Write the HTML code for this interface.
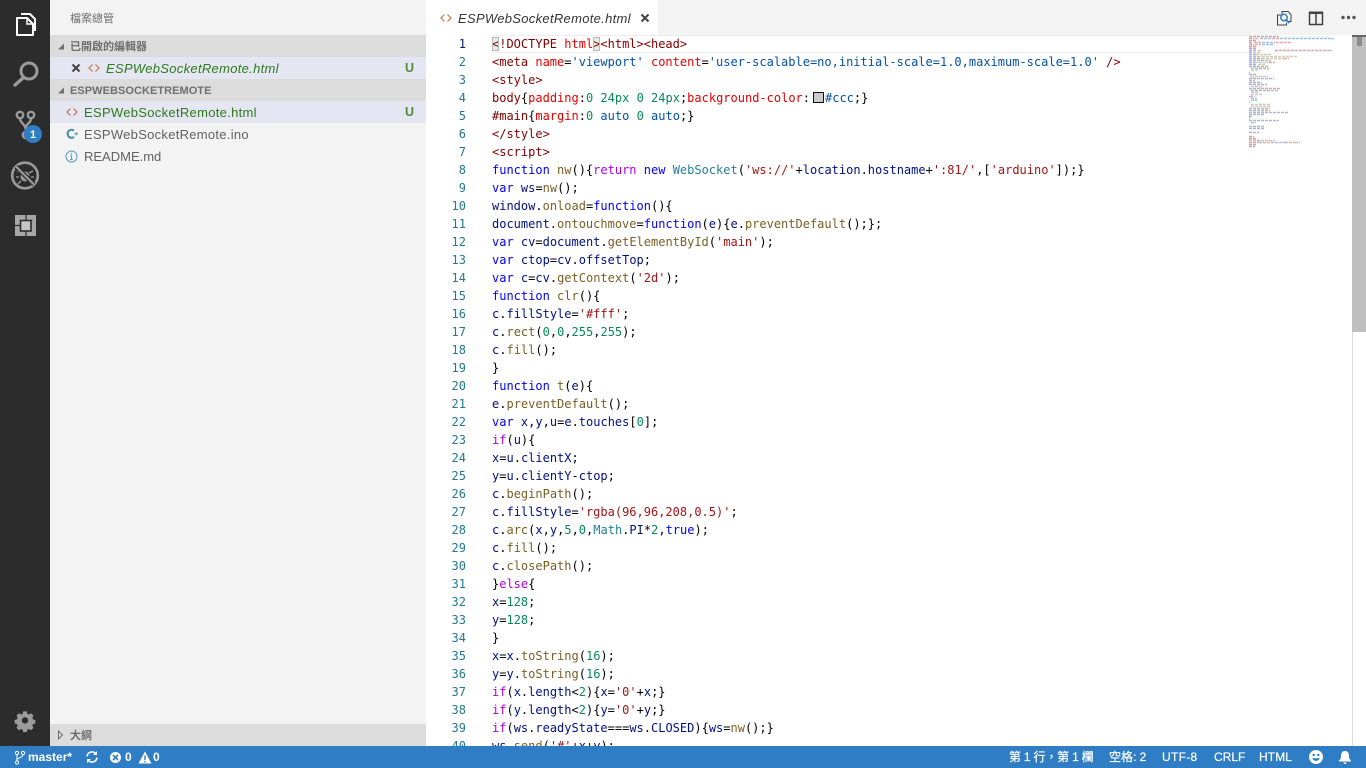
<!DOCTYPE html>
<html><head><meta charset="utf-8"><title>ESPWebSocketRemote.html</title>
<style>
html,body{margin:0;padding:0;width:1366px;height:768px;overflow:hidden;background:#fff}
body{font-family:"Liberation Sans","Noto Sans CJK TC",sans-serif;position:relative}
div{box-sizing:border-box}
.abs{position:absolute}
#act{left:0;top:0;width:50px;height:746px;background:#2c2c2c}
#side{left:50px;top:0;width:376px;height:746px;background:#f3f3f3;color:#616161}
.row{position:absolute;left:0;width:376px;height:22px;line-height:22px;font-size:13px;white-space:nowrap}
.hd{background:#dcdcdc;font-size:11px;font-weight:bold;color:#6f6f6f}
.hd span{top:1px}
.sel{background:#e4e6f1}
.g{color:#2f7a1d}
.nm{position:absolute;top:1px;letter-spacing:.3px}
.u{position:absolute;left:355px;top:0;font-weight:bold;font-size:12.500px;color:#4f8a3c}
#tabs{left:426px;top:0;width:940px;height:35px;background:#f3f3f3}
#tab{left:0;top:0;width:232px;height:35px;background:#fff}
#ed{left:426px;top:35px;width:940px;height:711px;overflow:hidden;background:#fff}
#code,#nums{position:absolute;top:0;font-family:"DejaVu Sans Mono","Liberation Mono",monospace;font-size:12px;line-height:18px;white-space:pre;color:#000}
#code{left:66px}
#nums{left:0;width:40px;text-align:right;color:#237893}
#nums b{font-weight:normal;color:#0b216f}
.t{color:#800000}.a{color:#e50000}.s{color:#0451a5}.q{color:#a31515}.n{color:#09885a}.k{color:#0000ff}.c{color:#af00db}.f{color:#795e26}.v{color:#001080}.y{color:#267f99}
.br{background:#e3ece3;outline:1px solid #b9b9b9;outline-offset:-1px}
.sw{display:inline-block;width:11px;height:11px;border:1px solid #111;background:#ccc;margin:0 1px 0 3px;vertical-align:-1px;box-sizing:border-box}
#st{left:0;top:746px;width:1366px;height:22px;background:#2f7dc4;color:#fff;font-size:12px;line-height:22px}
#st span{position:absolute;top:0;white-space:nowrap}
</style></head>
<body>

<div id="act" class="abs">
<svg width="50" height="746" style="position:absolute;left:0;top:0">
 <g fill="none" stroke="#fff" stroke-width="2">
  <path d="M17 18h10l6 6v11H17z" stroke-linejoin="round"/>
  <path d="M27 18v6h6" stroke-width="1.500"/>
  <path d="M21 14h9l5 5v12" stroke-width="2"/>
 </g>
 <g fill="none" stroke="#9b9b9b">
  <circle cx="29" cy="71" r="8" stroke-width="3"/>
  <path d="M23 78l-8 7" stroke-width="3.400" stroke-linecap="round"/>
 </g>
 <g fill="none" stroke="#9b9b9b" stroke-width="2.400">
  <circle cx="20" cy="115" r="3.200"/><circle cx="31" cy="115" r="3.200"/><circle cx="26" cy="135" r="3.200"/>
  <path d="M20 118.500c0 5 6 5 6 13M31 118.500c0 5-5 5-5 9"/>
 </g>
 <circle cx="33" cy="134" r="9" fill="#2f7dc4"/>
 <text x="33" y="138" font-size="11" font-weight="bold" fill="#fff" text-anchor="middle" font-family="Liberation Sans">1</text>
 <g fill="none" stroke="#9b9b9b">
  <circle cx="25" cy="175.500" r="12.800" stroke-width="2.600"/>
  <path d="M16 177h3M31 177h3M17 171l4 2M33 171l-4 2M18 184l3-3M32 184l-3-3" stroke-width="1.300"/>
 </g>
 <ellipse cx="25" cy="176.500" rx="4.500" ry="5" fill="#9b9b9b"/>
 <path d="M16 166.500l18 18" stroke="#2c2c2c" stroke-width="4.500" fill="none"/>
 <path d="M16 166.500l18 18" stroke="#9b9b9b" stroke-width="2.200" fill="none"/>
 <g>
  <rect x="15" y="215" width="21" height="21" fill="#a6a6a6"/>
  <rect x="20.500" y="220.500" width="10.500" height="10.500" fill="#c4c4c4" stroke="#2c2c2c" stroke-width="1.600"/>
  <path d="M26 215v5M15 225.500h5M31 220.500l5-5M26 231v5" stroke="#2c2c2c" stroke-width="1.200"/>
  <path d="M31.500 215h4.500v4.500h-4.500z" fill="#a6a6a6"/>
 </g>
 <g fill="#9b9b9b" transform="translate(2.500 71.500) scale(.9)">
  <path fill-rule="evenodd" d="M23 711h4l.6 2.600 1.800.8 2.300-1.400 2.800 2.800-1.400 2.300.8 1.800 2.600.6v4l-2.600.6-.8 1.800 1.400 2.300-2.800 2.800-2.300-1.400-1.800.8-.6 2.600h-4l-.6-2.600-1.800-.8-2.300 1.400-2.800-2.800 1.400-2.300-.8-1.800-2.600-.6v-4l2.600-.6.8-1.800-1.400-2.300 2.800-2.800 2.300 1.400 1.800-.8zM25 717.500a3.500 3.500 0 1 0 .01 0z"/>
 </g>
</svg>
</div>

<div id="side" class="abs">
 <div class="abs" style="left:20px;top:10px;font-size:11px;line-height:18px;color:#6f6f6f">檔案總管</div>

 <div class="row hd" style="top:35px"><svg class="abs" style="left:7px;top:8px" width="8" height="8"><path d="M1 6.500h6v-6z" fill="#6f6f6f"/></svg><span class="abs" style="left:20px">已開啟的編輯器</span></div>

 <div class="row sel" style="top:57px">
  <svg class="abs" style="left:21px;top:6px" width="10" height="10"><path d="M1.500 1.500l7 7M8.500 1.500l-7 7" stroke="#424242" stroke-width="2"/></svg>
  <svg class="abs" style="left:38px;top:6px" width="12" height="10"><path d="M4.500 1.500L1 5l3.500 3.500M7.500 1.500L11 5 7.500 8.500" fill="none" stroke="#c5764a" stroke-width="1.200"/></svg>
  <span class="nm g" style="left:56px;font-style:italic">ESPWebSocketRemote.html</span><span class="u">U</span>
 </div>

 <div class="row hd" style="top:79px"><svg class="abs" style="left:7px;top:8px" width="8" height="8"><path d="M1 6.500h6v-6z" fill="#6f6f6f"/></svg><span class="abs" style="left:20px;letter-spacing:.05px">ESPWEBSOCKETREMOTE</span></div>

 <div class="row sel" style="top:101px">
  <svg class="abs" style="left:16px;top:6px" width="12" height="10"><path d="M4.500 1.500L1 5l3.500 3.500M7.500 1.500L11 5 7.500 8.500" fill="none" stroke="#c5764a" stroke-width="1.200"/></svg>
  <span class="nm g" style="left:34px">ESPWebSocketRemote.html</span><span class="u">U</span>
 </div>

 <div class="row" style="top:123px">
  <svg class="abs" style="left:16px;top:5px" width="13" height="12"><path d="M8 2.600A4 4 0 1 0 8 9" fill="none" stroke="#4f8fb0" stroke-width="2.200"/><path d="M8.500 5.800h3.500M10.200 4.200v3.200" stroke="#4f8fb0" stroke-width="1"/></svg>
  <span class="nm" style="left:34px;letter-spacing:.28px">ESPWebSocketRemote.ino</span>
 </div>

 <div class="row" style="top:145px">
  <svg class="abs" style="left:15px;top:5px" width="13" height="13"><circle cx="6.500" cy="6.500" r="5.500" fill="none" stroke="#5f9ab8" stroke-width="1"/><path d="M6.500 5.500v4M5.200 9.600h2.600M5.300 5.600h1.200" stroke="#5f9ab8" stroke-width="1.100" fill="none"/><circle cx="6.500" cy="3.500" r=".8" fill="#5f9ab8"/></svg>
  <span class="nm" style="left:34px;letter-spacing:0">README.md</span>
 </div>

 <div class="row hd" style="top:724px;font-size:11px"><svg class="abs" style="left:7px;top:6px" width="8" height="10"><path d="M1.500 1l4 4-4 4z" fill="none" stroke="#6f6f6f"/></svg><span class="abs" style="left:20px">大綱</span></div>
</div>

<div id="tabs" class="abs">
 <div id="tab" class="abs">
  <svg class="abs" style="left:14px;top:13px" width="12" height="10"><path d="M4.500 1.500L1 5l3.500 3.500M7.500 1.500L11 5 7.500 8.500" fill="none" stroke="#c5764a" stroke-width="1.200"/></svg>
  <span class="abs" style="left:32px;top:10px;font-size:13px;line-height:18px;font-style:italic;color:#333;letter-spacing:.3px;white-space:nowrap">ESPWebSocketRemote.html</span>
  <svg class="abs" style="left:214px;top:13px" width="10" height="10"><path d="M1.500 1.500l7 7M8.500 1.500l-7 7" stroke="#424242" stroke-width="2"/></svg>
 </div>
 <svg class="abs" style="left:850px;top:8px" width="90" height="20">
  <path d="M7 7H1.500v10h9V15M6 6V3.500h6l3 3v7h-3" fill="none" stroke="#424242" stroke-width="1"/>
  <circle cx="8" cy="9.500" r="3.200" fill="none" stroke="#2f7dc4" stroke-width="1.500"/>
  <path d="M10.300 12l3 3" stroke="#2f7dc4" stroke-width="1.800"/>
  <path d="M33.500 4.500h13v12h-13zM40 4.500v12" fill="none" stroke="#424242" stroke-width="1.500"/>
  <path d="M33 3.500h14v2.500H33z" fill="#424242"/>
  <circle cx="67" cy="9.500" r="1.700" fill="#555"/><circle cx="72.500" cy="9.500" r="1.700" fill="#555"/><circle cx="78" cy="9.500" r="1.700" fill="#555"/>
 </svg>
</div>

<div id="ed" class="abs">
 <div class="abs" style="left:66px;top:0;width:757px;height:18px;border-top:1px solid #eee;border-bottom:1px solid #eee"></div>
<div id="nums"><b>1</b>
2
3
4
5
6
7
8
9
10
11
12
13
14
15
16
17
18
19
20
21
22
23
24
25
26
27
28
29
30
31
32
33
34
35
36
37
38
39
40</div>
<div id="code"><span class="t"><span class="br">&lt;</span>!DOCTYPE <span class="a">html</span><span class="br">&gt;</span>&lt;html&gt;&lt;head&gt;</span>
<span class="t">&lt;meta</span> <span class="a">name</span>=<span class="s">'viewport'</span> <span class="a">content</span>=<span class="s">'user-scalable=no,initial-scale=1.0,maximum-scale=1.0'</span> <span class="t">/&gt;</span>
<span class="t">&lt;style&gt;</span>
<span class="t">body</span>{<span class="a">padding</span>:<span class="n">0</span> <span class="n">24px</span> <span class="n">0</span> <span class="n">24px</span>;<span class="a">background-color</span>:<span class="sw"></span><span class="s">#ccc</span>;}
<span class="t">#main</span>{<span class="a">margin</span>:<span class="n">0</span> <span class="s">auto</span> <span class="n">0</span> <span class="s">auto</span>;}
<span class="t">&lt;/style&gt;</span>
<span class="t">&lt;script&gt;</span>
<span class="k">function</span> <span class="f">nw</span>(){<span class="c">return</span> <span class="k">new</span> <span class="y">WebSocket</span>(<span class="q">'ws://'</span>+<span class="v">location</span>.<span class="v">hostname</span>+<span class="q">':81/'</span>,[<span class="q">'arduino'</span>]);}
<span class="k">var</span> <span class="v">ws</span>=<span class="f">nw</span>();
<span class="v">window</span>.<span class="f">onload</span>=<span class="k">function</span>(){
<span class="v">document</span>.<span class="f">ontouchmove</span>=<span class="k">function</span>(<span class="v">e</span>){<span class="v">e</span>.<span class="f">preventDefault</span>();};
<span class="k">var</span> <span class="v">cv</span>=<span class="v">document</span>.<span class="f">getElementById</span>(<span class="q">'main'</span>);
<span class="k">var</span> <span class="v">ctop</span>=<span class="v">cv</span>.<span class="v">offsetTop</span>;
<span class="k">var</span> <span class="v">c</span>=<span class="v">cv</span>.<span class="f">getContext</span>(<span class="q">'2d'</span>);
<span class="k">function</span> <span class="f">clr</span>(){
<span class="v">c</span>.<span class="v">fillStyle</span>=<span class="q">'#fff'</span>;
<span class="v">c</span>.<span class="f">rect</span>(<span class="n">0</span>,<span class="n">0</span>,<span class="n">255</span>,<span class="n">255</span>);
<span class="v">c</span>.<span class="f">fill</span>();
}
<span class="k">function</span> <span class="f">t</span>(<span class="v">e</span>){
<span class="v">e</span>.<span class="f">preventDefault</span>();
<span class="k">var</span> <span class="v">x</span>,<span class="v">y</span>,<span class="v">u</span>=<span class="v">e</span>.<span class="v">touches</span>[<span class="n">0</span>];
<span class="c">if</span>(<span class="v">u</span>){
<span class="v">x</span>=<span class="v">u</span>.<span class="v">clientX</span>;
<span class="v">y</span>=<span class="v">u</span>.<span class="v">clientY</span>-<span class="v">ctop</span>;
<span class="v">c</span>.<span class="f">beginPath</span>();
<span class="v">c</span>.<span class="v">fillStyle</span>=<span class="q">'rgba(96,96,208,0.5)'</span>;
<span class="v">c</span>.<span class="f">arc</span>(<span class="v">x</span>,<span class="v">y</span>,<span class="n">5</span>,<span class="n">0</span>,<span class="y">Math</span>.<span class="v">PI</span>*<span class="n">2</span>,<span class="k">true</span>);
<span class="v">c</span>.<span class="f">fill</span>();
<span class="v">c</span>.<span class="f">closePath</span>();
}<span class="c">else</span>{
<span class="v">x</span>=<span class="n">128</span>;
<span class="v">y</span>=<span class="n">128</span>;
}
<span class="v">x</span>=<span class="v">x</span>.<span class="f">toString</span>(<span class="n">16</span>);
<span class="v">y</span>=<span class="v">y</span>.<span class="f">toString</span>(<span class="n">16</span>);
<span class="c">if</span>(<span class="v">x</span>.<span class="v">length</span>&lt;<span class="n">2</span>){<span class="v">x</span>=<span class="q">'0'</span>+<span class="v">x</span>;}
<span class="c">if</span>(<span class="v">y</span>.<span class="v">length</span>&lt;<span class="n">2</span>){<span class="v">y</span>=<span class="q">'0'</span>+<span class="v">y</span>;}
<span class="c">if</span>(<span class="v">ws</span>.<span class="v">readyState</span>===<span class="v">ws</span>.<span class="v">CLOSED</span>){<span class="v">ws</span>=<span class="f">nw</span>();}
<span class="v">ws</span>.<span class="f">send</span>(<span class="q">'#'</span>+<span class="v">x</span>+<span class="v">y</span>);</div>

 <svg class="abs" style="left:823px;top:0;background:#fff" width="103" height="116">
  <g fill="none" stroke-width="1.600" opacity=".5" stroke-dasharray="3 1">
   <path stroke="#9a4a44" d="M0 1.500h30M0 3.500h5M0 5.500h7M0 7.500h4M0 9.500h5M0 11.500h8M0 13.500h8"/>
   <path stroke="#e05050" d="M6 3.500h4M23 3.500h7M5 7.500h7M27 7.500h16M6 9.500h6"/>
   <path stroke="#5080d0" d="M11 3.500h11M31 3.500h54M13 7.500h13M13 9.500h11"/>
   <path stroke="#3f5fe0" d="M0 15.500h8M26 15.500h3M0 17.500h3M0 23.500h3M0 25.500h3M0 27.500h3M0 29.500h8M0 39.500h8M0 43.500h3"/>
   <path stroke="#a89870" d="M9 15.500h3M4 17.500h8M7 19.500h15M9 21.500h40M13 23.500h22M6 27.500h14M9 29.500h7M2 33.500h18M2 35.500h7M2 41.500h17M2 51.500h12M2 55.500h9M2 57.500h7M2 59.500h12M2 69.500h19M2 71.500h19"/>
   <path stroke="#c05050" d="M30 15.500h53M35 23.500h5M20 27.500h6M12 31.500h7M12 53.500h19M16 75.500h5M16 73.500h5"/>
   <path stroke="#5f70a0" d="M0 19.500h7M0 21.500h9M4 23.500h9M4 25.500h18M4 27.500h2M0 31.500h12M0 43.500h25M0 47.500h13M0 49.500h18M0 53.500h12M2 55.500h20M0 61.500h3M0 73.500h16M0 75.500h16M0 77.500h40M0 79.500h16"/>
   <path stroke="#40a080" d="M2 33.500h18M2 63.500h6M2 65.500h6M22 55.500h8"/>
   <path stroke="#a050d0" d="M0 45.500h6M1 61.500h5"/>
   <path stroke="#666" d="M0 37.500h1M0 67.500h1M0 83.500h1"/>
   <path stroke="#5f70a0" d="M0 81.500h4M0 85.500h30M2 87.500h5M0 91.500h16M0 93.500h16M0 97.500h10"/>
   <path stroke="#9a4a44" d="M0 101.500h5M0 103.500h8M0 105.500h10M0 109.500h7M0 111.500h6"/>
   <path stroke="#888" d="M0 105.500h26"/>
   <path stroke="#e05050" d="M0 107.500h10M14 107.500h12M36 107.500h10"/>
   <path stroke="#5080d0" d="M10 107.500h4M26 107.500h10M46 107.500h5"/>
  </g>
 </svg>

 <div class="abs" style="left:926px;top:0;width:14px;height:711px;border-left:1px solid #dcdcdc;background:#fff"></div>
 <div class="abs" style="left:926px;top:0;width:14px;height:297px;background:#bfbfbf"></div>
 <div class="abs" style="left:926px;top:0;width:14px;height:2px;background:#666"></div>
 <div class="abs" style="left:931px;top:2px;width:5px;height:9px;background:#8c8c8c"></div>
</div>

<div id="st" class="abs">
 <svg class="abs" style="left:14px;top:4px" width="12" height="15"><g fill="none" stroke="#fff" stroke-width="1"><circle cx="3" cy="3" r="1.600"/><circle cx="9" cy="3" r="1.600"/><circle cx="3" cy="12.500" r="1.600"/><path d="M3 4.600v6.300M9 4.600c0 3.400-6 3-6 5.400"/></g></svg>
 <span style="left:28px;font-weight:bold">master*</span>
 <svg class="abs" style="left:85px;top:4px" width="14" height="14"><path d="M2 6.500A5 5 0 0 1 11 4M12 7.500A5 5 0 0 1 3 10" fill="none" stroke="#fff" stroke-width="1.500"/><path d="M12 1v4H8zM2 13V9h4z" fill="#fff"/></svg>
 <svg class="abs" style="left:109px;top:5px" width="13" height="13"><circle cx="6.500" cy="6.500" r="5.500" fill="#fff"/><path d="M4 4l5 5M9 4l-5 5" stroke="#2f7dc4" stroke-width="1.600"/></svg>
 <span style="left:125px;font-weight:bold">0</span>
 <svg class="abs" style="left:138px;top:5px" width="14" height="13"><path d="M7 0.500l6.500 12H.5z" fill="#fff"/><path d="M7 4.500v4.500M7 10v1.500" stroke="#2f7dc4" stroke-width="1.400"/></svg>
 <span style="left:153px;font-weight:bold">0</span>

 <span style="left:1009px;letter-spacing:-.2px;-webkit-text-stroke:.2px #fff">第 1 行，第 1 欄</span>
 <span style="left:1109px;-webkit-text-stroke:.2px #fff">空格: 2</span>
 <span style="left:1162px;letter-spacing:.3px;-webkit-text-stroke:.2px #fff">UTF-8</span>
 <span style="left:1214px;-webkit-text-stroke:.2px #fff">CRLF</span>
 <span style="left:1259px;letter-spacing:.1px;-webkit-text-stroke:.2px #fff">HTML</span>
 <svg class="abs" style="left:1309px;top:4px" width="14" height="14"><circle cx="7" cy="7" r="7" fill="#fff"/><circle cx="4.700" cy="5" r="1.200" fill="#2f7dc4"/><circle cx="9.300" cy="5" r="1.200" fill="#2f7dc4"/><path d="M3.200 8.200c1 3.400 6.600 3.400 7.600 0z" fill="#2f7dc4"/></svg>
 <svg class="abs" style="left:1338px;top:4px" width="14" height="15"><path d="M7 1c3 0 4 2.500 4 5 0 2.500 1 3.500 2 4.500v1H1v-1c1-1 2-2 2-4.500C3 3.500 4 1 7 1zM5.500 12.500h3A1.500 1.500 0 0 1 5.500 12.500z" fill="#fff"/></svg>
</div>
</body></html>
